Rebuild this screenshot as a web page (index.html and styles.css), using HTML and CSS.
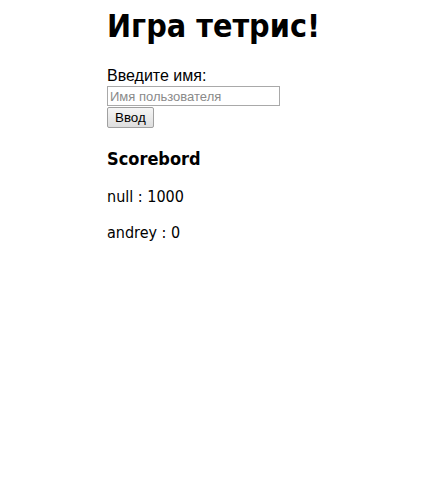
FILE: index.html
```html
<!DOCTYPE html>
<html lang="ru">
<head>
<meta charset="utf-8">
<title>Тетрис</title>
<link rel="stylesheet" href="styles.css">
</head>
<body>
<div class="page">
  <h1 class="title">Игра тетрис!</h1>
  <form class="login">
    <label class="label" for="name">Введите имя:</label>
    <input class="name-input" id="name" type="text" placeholder="Имя пользователя">
    <button class="submit" type="button">Ввод</button>
  </form>
  <h3 class="score-title">Scorebord</h3>
  <p class="score">null : 1000</p>
  <p class="score">andrey : 0</p>
</div>
</body>
</html>
```

FILE: styles.css
```css
html, body {
  margin: 0;
  background: #fff;
}
body {
  padding: 8px 0;
  font-family: "DejaVu Sans Condensed", "DejaVu Sans", Tahoma, sans-serif;
  color: #000;
}
.page {
  width: 228px;
  margin: 0 auto;
}
.title {
  margin: 0;
  font-size: 32px;
  font-weight: bold;
  line-height: 37px;
  white-space: nowrap;
}
.login {
  margin-top: 21px;
  display: flex;
  flex-direction: column;
  align-items: flex-start;
}
.label {
  font-family: "Liberation Sans", Arial, sans-serif;
  font-size: 16px;
  line-height: 20px;
}
.name-input {
  width: 173px;
  height: 20px;
  box-sizing: border-box;
  margin: 0;
  padding: 1px 2px;
  border: 1px solid #a9a9a9;
  font-family: "Liberation Sans", Arial, sans-serif;
  font-size: 13px;
}
.name-input::placeholder {
  color: #8a8a8a;
}
.submit {
  margin-top: 1px;
  height: 21px;
  padding: 0 7px;
  font-family: "Liberation Sans", Arial, sans-serif;
  font-size: 13.33px;
  border: 1px solid #a0a0a0;
  background: linear-gradient(#f6f6f6, #dedede);
  border-radius: 2px;
  color: #000;
}
.score-title {
  margin: 20px 0 0;
  font-size: 18px;
  line-height: 22px;
}
.score {
  margin: 18px 0 0;
  font-size: 16px;
  line-height: 18px;
}
```
